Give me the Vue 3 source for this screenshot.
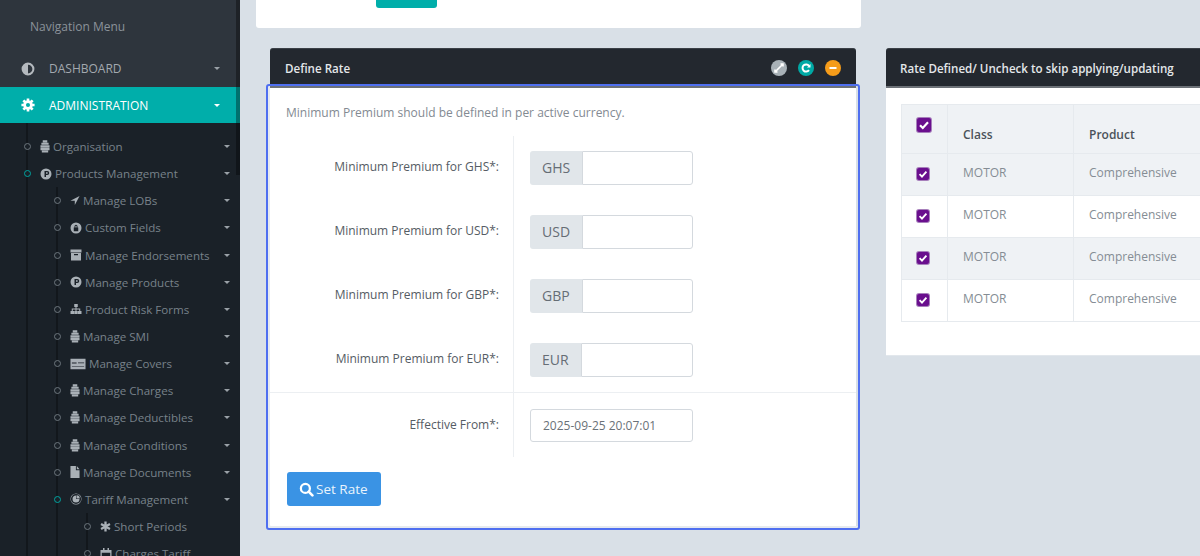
<template>
  <div class="layout">
    <aside class="sidebar">
      <div class="scroll-strip"></div>
      <div class="nav-title">Navigation Menu</div>
      <div class="top-link">
        <svg class="top-icon" viewBox="0 0 24 24"><path fill-rule="evenodd" :d="icons.adjust.d" /></svg>
        <span>Dashboard</span>
        <i class="caret"></i>
      </div>
      <div class="top-link active">
        <svg class="top-icon" viewBox="0 0 24 24"><path fill-rule="evenodd" :d="icons.cog.d" /></svg>
        <span>Administration</span>
        <i class="caret"></i>
      </div>
      <ul class="tree">
        <li v-for="item in menu" :key="item.label" class="tree-row" :class="'lv' + item.level">
          <span class="dot" :class="{ on: item.on }"></span>
          <svg
            class="tree-icon"
            :width="icons[item.icon].w"
            :height="icons[item.icon].h"
            :viewBox="icons[item.icon].box"
          >
            <path :fill-rule="icons[item.icon].rule || 'evenodd'" :d="icons[item.icon].d" />
          </svg>
          <span class="tree-label">{{ item.label }}</span>
          <i v-if="item.level < 3" class="caret"></i>
        </li>
      </ul>
    </aside>

    <main class="content">
      <div class="top-card">
        <div class="top-btn"></div>
      </div>

      <div class="panels">
        <section class="panel focused">
          <header class="panel-head">
            <h4>Define Rate</h4>
            <div class="head-tools">
              <span class="tool grey">
                <svg viewBox="0 0 16 16"><path d="M4.500 11.500l7-7M9.500 4h2.500v2.500M4 9.500V12h2.500" fill="none" stroke="#fff" stroke-width="1.600" /></svg>
              </span>
              <span class="tool teal">
                <svg viewBox="0 0 16 16"><path d="M11 10.200a3.600 3.600 0 1 1 0-4.400" fill="none" stroke="#fff" stroke-width="2" /><path d="M12.500 4v3.500H9z" fill="#fff" /></svg>
              </span>
              <span class="tool orange">
                <svg viewBox="0 0 16 16"><path d="M4.500 7h7v2h-7z" fill="#fff" /></svg>
              </span>
            </div>
          </header>
          <div class="panel-body">
            <p class="hint">Minimum Premium should be defined in per active currency.</p>
            <div v-for="cur in currencies" :key="cur" class="form-row">
              <label class="form-label">Minimum Premium for {{ cur }}*:</label>
              <div class="form-field">
                <div class="input-group">
                  <span class="addon">{{ cur }}</span>
                  <input class="control" type="text" />
                </div>
              </div>
            </div>
            <div class="form-row last">
              <label class="form-label">Effective From*:</label>
              <div class="form-field">
                <input class="control date" type="text" value="2025-09-25 20:07:01" />
              </div>
            </div>
            <button class="set-rate" type="button">
              <svg viewBox="0 0 16 16" width="15" height="15"><circle cx="6.800" cy="6.800" r="4.800" fill="none" stroke="#fff" stroke-width="2.400" /><path d="M10.300 10.300l4 4" stroke="#fff" stroke-width="2.800" stroke-linecap="round" /></svg>
              Set Rate
            </button>
          </div>
        </section>

        <section class="panel side">
          <header class="panel-head">
            <h4>Rate Defined/ Uncheck to skip applying/updating</h4>
          </header>
          <div class="side-body">
            <table class="rates">
              <thead>
                <tr>
                  <th class="check-col">
                    <span class="check big">
                      <svg viewBox="0 0 14 14"><path d="M3 7.200l2.800 2.800L11 4.300" fill="none" stroke="#fff" stroke-width="2.200" /></svg>
                    </span>
                  </th>
                  <th class="class-col">Class</th>
                  <th class="product-col">Product</th>
                </tr>
              </thead>
              <tbody>
                <tr v-for="(row, i) in rows" :key="i">
                  <td class="check-cell">
                    <span class="check">
                      <svg viewBox="0 0 14 14"><path d="M3 7.200l2.800 2.800L11 4.300" fill="none" stroke="#fff" stroke-width="2.200" /></svg>
                    </span>
                  </td>
                  <td>{{ row.cls }}</td>
                  <td>{{ row.product }}</td>
                </tr>
              </tbody>
            </table>
          </div>
        </section>
      </div>
    </main>
  </div>
</template>

<script setup>
// gear outline with 8 teeth, hole in the middle
const gearPath = () => {
  let d = '';
  const teeth = 8;
  for (let i = 0; i < teeth; i++) {
    const a = (i / teeth) * Math.PI * 2;
    const pts = [
      [8.2, a - 0.28],
      [11.5, a - 0.2],
      [11.5, a + 0.2],
      [8.2, a + 0.28]
    ];
    pts.forEach(([r, t], n) => {
      const x = (12 + r * Math.cos(t)).toFixed(2);
      const y = (12 + r * Math.sin(t)).toFixed(2);
      d += (i === 0 && n === 0 ? 'M' : 'L') + x + ' ' + y;
    });
  }
  return d + 'zM12 8.500a3.500 3.500 0 1 0 0 7a3.500 3.500 0 1 0 0-7z';
};

const disc = 'M12 1a11 11 0 1 0 0 22a11 11 0 1 0 0-22z';

const icons = {
  adjust: { d: disc + 'M12 4.500a7.500 7.500 0 0 1 0 15z' },
  cog: { d: gearPath() },
  stack: { w: 10, h: 15, box: '0 0 22 30', d: 'M6 1h10v5H6zM3 7h16v4H3zM1 12h20v5H1zM1 18h20v5H1zM4 24h14v4H4z' },
  pcircle: { w: 12, h: 12, box: '0 0 24 24', d: disc + 'M9 6v12h3v-4h2.500a4 4 0 0 0 0-8zM12 8.500h2.200a1.500 1.500 0 0 1 0 3H12z' },
  arrow: { w: 10, h: 11, box: '0 0 24 24', d: 'M23 1L1 12.500h10.500V23z' },
  lock: { w: 12, h: 12, box: '0 0 24 24', d: disc + 'M7.500 11h9v7.500h-9zM9 11V8.500a3 3 0 0 1 6 0V11h-1.800V8.500a1.200 1.200 0 0 0-2.400 0V11z' },
  archive: { w: 12, h: 12, box: '0 0 24 24', d: 'M1 1h22v6H1zM2 8h20v15H2zM8 10h8v2.500H8z' },
  sitemap: { w: 12, h: 12, box: '0 0 24 24', d: 'M8.500 2h7v6H13v3h7.500v5H23v6h-7v-6h2.500v-3H13v3h2.500v6h-7v-6H11v-3H5.500v3H8v6H1v-6h2.500v-5H11V8H8.500z' },
  card: { w: 16, h: 12, box: '0 0 34 24', d: 'M1 1h32v22H1zM4 9h10v2H4zM17 9h13v1.500H17zM4 16h26v1.500H4z' },
  file: { w: 10, h: 14, box: '0 0 22 28', d: 'M1 1h12v9h8v17H1zM15 1l6 7h-6z' },
  pacman: { w: 12, h: 12, box: '0 0 24 24', d: disc + 'M12 1.800a10.200 10.200 0 1 0 0 20.400a10.200 10.200 0 1 0 0-20.400zM12 5a7 7 0 1 0 7 7h-7zM13 4.500a6.500 6.500 0 0 1 6.500 6.500H13z' },
  star: { w: 11, h: 11, box: '0 0 24 24', rule: 'nonzero', d: 'M9.500 1h5v22h-5zM1 8.500L3.500 4.200 23 15.500l-2.500 4.300zM1 15.500L20.500 4.200 23 8.500 3.500 19.800z' },
  calendar: { w: 12, h: 12, box: '0 0 24 24', d: 'M1 4h22v20H1zM3.500 9.500h17V21.500h-17zM6 0h3v4H6zM15 0h3v4h-3z' }
};

const menu = [
  { label: 'Organisation', level: 1, icon: 'stack' },
  { label: 'Products Management', level: 1, icon: 'pcircle', on: true },
  { label: 'Manage LOBs', level: 2, icon: 'arrow' },
  { label: 'Custom Fields', level: 2, icon: 'lock' },
  { label: 'Manage Endorsements', level: 2, icon: 'archive' },
  { label: 'Manage Products', level: 2, icon: 'pcircle' },
  { label: 'Product Risk Forms', level: 2, icon: 'sitemap' },
  { label: 'Manage SMI', level: 2, icon: 'stack' },
  { label: 'Manage Covers', level: 2, icon: 'card' },
  { label: 'Manage Charges', level: 2, icon: 'stack' },
  { label: 'Manage Deductibles', level: 2, icon: 'stack' },
  { label: 'Manage Conditions', level: 2, icon: 'stack' },
  { label: 'Manage Documents', level: 2, icon: 'file' },
  { label: 'Tariff Management', level: 2, icon: 'pacman', on: true },
  { label: 'Short Periods', level: 3, icon: 'star' },
  { label: 'Charges Tariff', level: 3, icon: 'calendar' }
];

const currencies = ['GHS', 'USD', 'GBP', 'EUR'];

const rows = [
  { cls: 'MOTOR', product: 'Comprehensive' },
  { cls: 'MOTOR', product: 'Comprehensive' },
  { cls: 'MOTOR', product: 'Comprehensive' },
  { cls: 'MOTOR', product: 'Comprehensive' }
];
</script>

<style>
html, body {
  margin: 0;
  padding: 0;
  height: 100%;
  overflow: hidden;
}
</style>

<style scoped>
.layout {
  display: flex;
  height: 556px;
  overflow: hidden;
  font-family: "Open Sans", "Liberation Sans", sans-serif;
  font-size: 12px;
  background: #d9e0e7;
}

/* sidebar */
.sidebar {
  position: relative;
  width: 240px;
  flex-shrink: 0;
  overflow: hidden;
  background: #2e353d;
}
.scroll-strip {
  position: absolute;
  top: 0;
  right: 0;
  width: 4px;
  height: 175px;
  background: rgba(0, 0, 0, 0.35);
  z-index: 2;
}
.nav-title {
  height: 48px;
  padding: 18px 0 0 30px;
  box-sizing: border-box;
  color: #8b929a;
  line-height: 18px;
}
.top-link {
  display: flex;
  align-items: center;
  height: 39px;
  padding: 2px 20px 0 21px;
  box-sizing: border-box;
  color: #a3a9af;
  text-transform: uppercase;
}
.top-link.active {
  height: 36px;
  padding-top: 0;
  background: #00aeaa;
  color: #fff;
}
.top-link.active .top-icon {
  fill: #fff;
}
.top-link .caret {
  margin-left: auto;
}
.top-link.active .caret {
  border-top-color: #fff;
}
.top-icon {
  width: 14px;
  height: 14px;
  margin-right: 14px;
  fill: #b4b9be;
}
.caret {
  display: block;
  width: 0;
  height: 0;
  border-left: 3.5px solid transparent;
  border-right: 3.5px solid transparent;
  border-top: 3px solid #9aa1a7;
}
.tree {
  list-style: none;
  margin: 0;
  padding: 10px 0 0;
  height: 433px;
  box-sizing: border-box;
  background: #1a2128 linear-gradient(#12171c, #12171c) 26px 0 / 2px 100% no-repeat;
  font-size: 11.6px;
}
.tree-row {
  display: flex;
  align-items: center;
  height: 27.15px;
  padding-right: 10px;
  color: #78828a;
}
.tree-row .caret {
  margin-left: auto;
}
.lv1 {
  padding-left: 24px;
}
.lv2 {
  padding-left: 54px;
  background: linear-gradient(#12171c, #12171c) 56px 0 / 2px 100% no-repeat;
}
.lv3 {
  padding-left: 84px;
  background:
    linear-gradient(#12171c, #12171c) 56px 0 / 2px 100% no-repeat,
    linear-gradient(#12171c, #12171c) 86px 0 / 2px 100% no-repeat;
}
.dot {
  width: 7px;
  height: 7px;
  box-sizing: border-box;
  margin-right: 9px;
  border: 1.5px solid #6d767d;
  border-radius: 50%;
  background: #1a2128;
  flex-shrink: 0;
}
.dot.on {
  border-color: #00a5a1;
}
.tree-icon {
  flex-shrink: 0;
  margin-right: 3px;
  fill: #a9b0b6;
}
.tree-label {
  white-space: nowrap;
}

/* main area */
.content {
  flex: 1;
  min-width: 0;
  overflow: hidden;
}
.top-card {
  width: 605px;
  height: 28px;
  margin-left: 16px;
  padding-left: 120px;
  box-sizing: border-box;
  background: #fff;
  border-radius: 0 0 3px 3px;
}
.top-btn {
  width: 61px;
  height: 8px;
  background: #00aeaa;
  border-radius: 0 0 3px 3px;
}
.panels {
  display: flex;
  align-items: flex-start;
  gap: 30px;
  margin-top: 20px;
  padding-left: 30px;
}
.panel {
  position: relative;
  width: 586px;
  flex-shrink: 0;
}
.panel.side {
  width: 500px;
}
.panel.focused::after {
  content: "";
  position: absolute;
  top: 36px;
  left: -4px;
  right: -4px;
  bottom: -4px;
  border: 2px solid #4f6ff0;
  border-radius: 3px;
  box-shadow: inset 2px -2px 0 #e6eaef;
  pointer-events: none;
}
.panel-head {
  display: flex;
  align-items: center;
  justify-content: space-between;
  height: 40px;
  box-sizing: border-box;
  padding: 2px 15px 0;
  background: #23282f;
  border-radius: 3px 3px 0 0;
  border-bottom: 2px solid #6c7177;
  border-top: 1px solid #3b4047;
}
.panel.side .panel-head {
  padding-left: 14px;
}
.panel-head h4 {
  margin: 0;
  font-size: 11.6px;
  font-weight: 600;
  color: #e3e7ea;
}
.head-tools {
  display: flex;
  gap: 11px;
  margin-top: -2px;
}
.tool {
  display: block;
  width: 16px;
  height: 16px;
  border-radius: 50%;
}
.tool svg {
  display: block;
}
.tool.grey {
  background: #a8b1b7;
}
.tool.teal {
  background: #00a9a5;
}
.tool.orange {
  background: #f59c1a;
}
.panel-body {
  background: #fff;
  padding: 16px 0 20px;
}
.hint {
  margin: 0 0 14px;
  padding-left: 16px;
  line-height: 18px;
  color: #838a92;
}
.form-row {
  display: grid;
  grid-template-columns: 244px 1fr;
}
.form-row.last {
  border-top: 1px solid #eceff2;
}
.form-label {
  padding: 22px 14px 0 0;
  border-right: 1px solid #eceff2;
  text-align: right;
  line-height: 18px;
  color: #555c64;
}
.form-row.last .form-label {
  padding-top: 23px;
}
.form-field {
  padding: 15px 0 15px 16px;
}
.form-row.last .form-field {
  padding-top: 16px;
}
.input-group {
  display: flex;
  width: 163px;
  height: 34px;
}
.addon {
  display: flex;
  align-items: center;
  padding: 0 12px 2px;
  font-size: 14px;
  color: #666d75;
  background: #e1e6ea;
  border-radius: 3px 0 0 3px;
}
.control {
  flex: 1;
  min-width: 0;
  height: 100%;
  box-sizing: border-box;
  padding: 0 12px;
  border: 1px solid #d4d9de;
  border-radius: 0 3px 3px 0;
  outline: none;
  background: #fff;
  font-family: inherit;
  font-size: 12px;
  color: #6a7178;
}
.control.date {
  display: block;
  width: 163px;
  height: 33px;
  border-radius: 3px;
}
.set-rate {
  display: flex;
  align-items: center;
  gap: 2px;
  height: 34px;
  margin: 15px 0 0 17px;
  padding: 0 13px 0 12px;
  border: 0;
  border-radius: 3px;
  background: #3a93e4;
  color: #e9f3fc;
  font-family: inherit;
  font-size: 13.5px;
}

/* right panel */
.side-body {
  height: 268px;
  box-sizing: border-box;
  padding: 16px 0 0 15px;
  background: #fff;
  border-bottom: 1px solid #e2e7ec;
}
.rates {
  border-collapse: collapse;
  table-layout: fixed;
  width: 372px;
}
.rates th,
.rates td {
  box-sizing: border-box;
  border: 1px solid #e6eaee;
  padding: 0 15px;
  text-align: left;
  font-weight: 400;
  color: #858d94;
}
.rates thead tr {
  height: 49px;
  background: #eff2f5;
}
.rates th {
  padding-top: 10px;
  font-weight: 600;
  color: #4b525a;
}
.rates tbody tr {
  height: 42px;
}
.rates tbody tr:nth-child(odd) {
  background: #eff2f5;
}
.rates td {
  padding-bottom: 5px;
}
.rates .check-col,
.rates .check-cell {
  padding: 0 3px 0 0;
  text-align: center;
}
.rates .check-col {
  padding-right: 1px;
}
.rates .check-cell {
  padding-bottom: 4px;
}
.check-col {
  width: 46px;
}
.class-col {
  width: 126px;
}
.product-col {
  width: 200px;
}
.check {
  display: inline-block;
  width: 12px;
  height: 12px;
  vertical-align: middle;
  border-radius: 2px;
  background: #6a0f8e;
  box-shadow: 0 0 0 1px #a77fbb;
}
.check svg {
  display: block;
  width: 100%;
  height: 100%;
}
.check.big {
  width: 14px;
  height: 14px;
  margin-bottom: 8px;
}
</style>
